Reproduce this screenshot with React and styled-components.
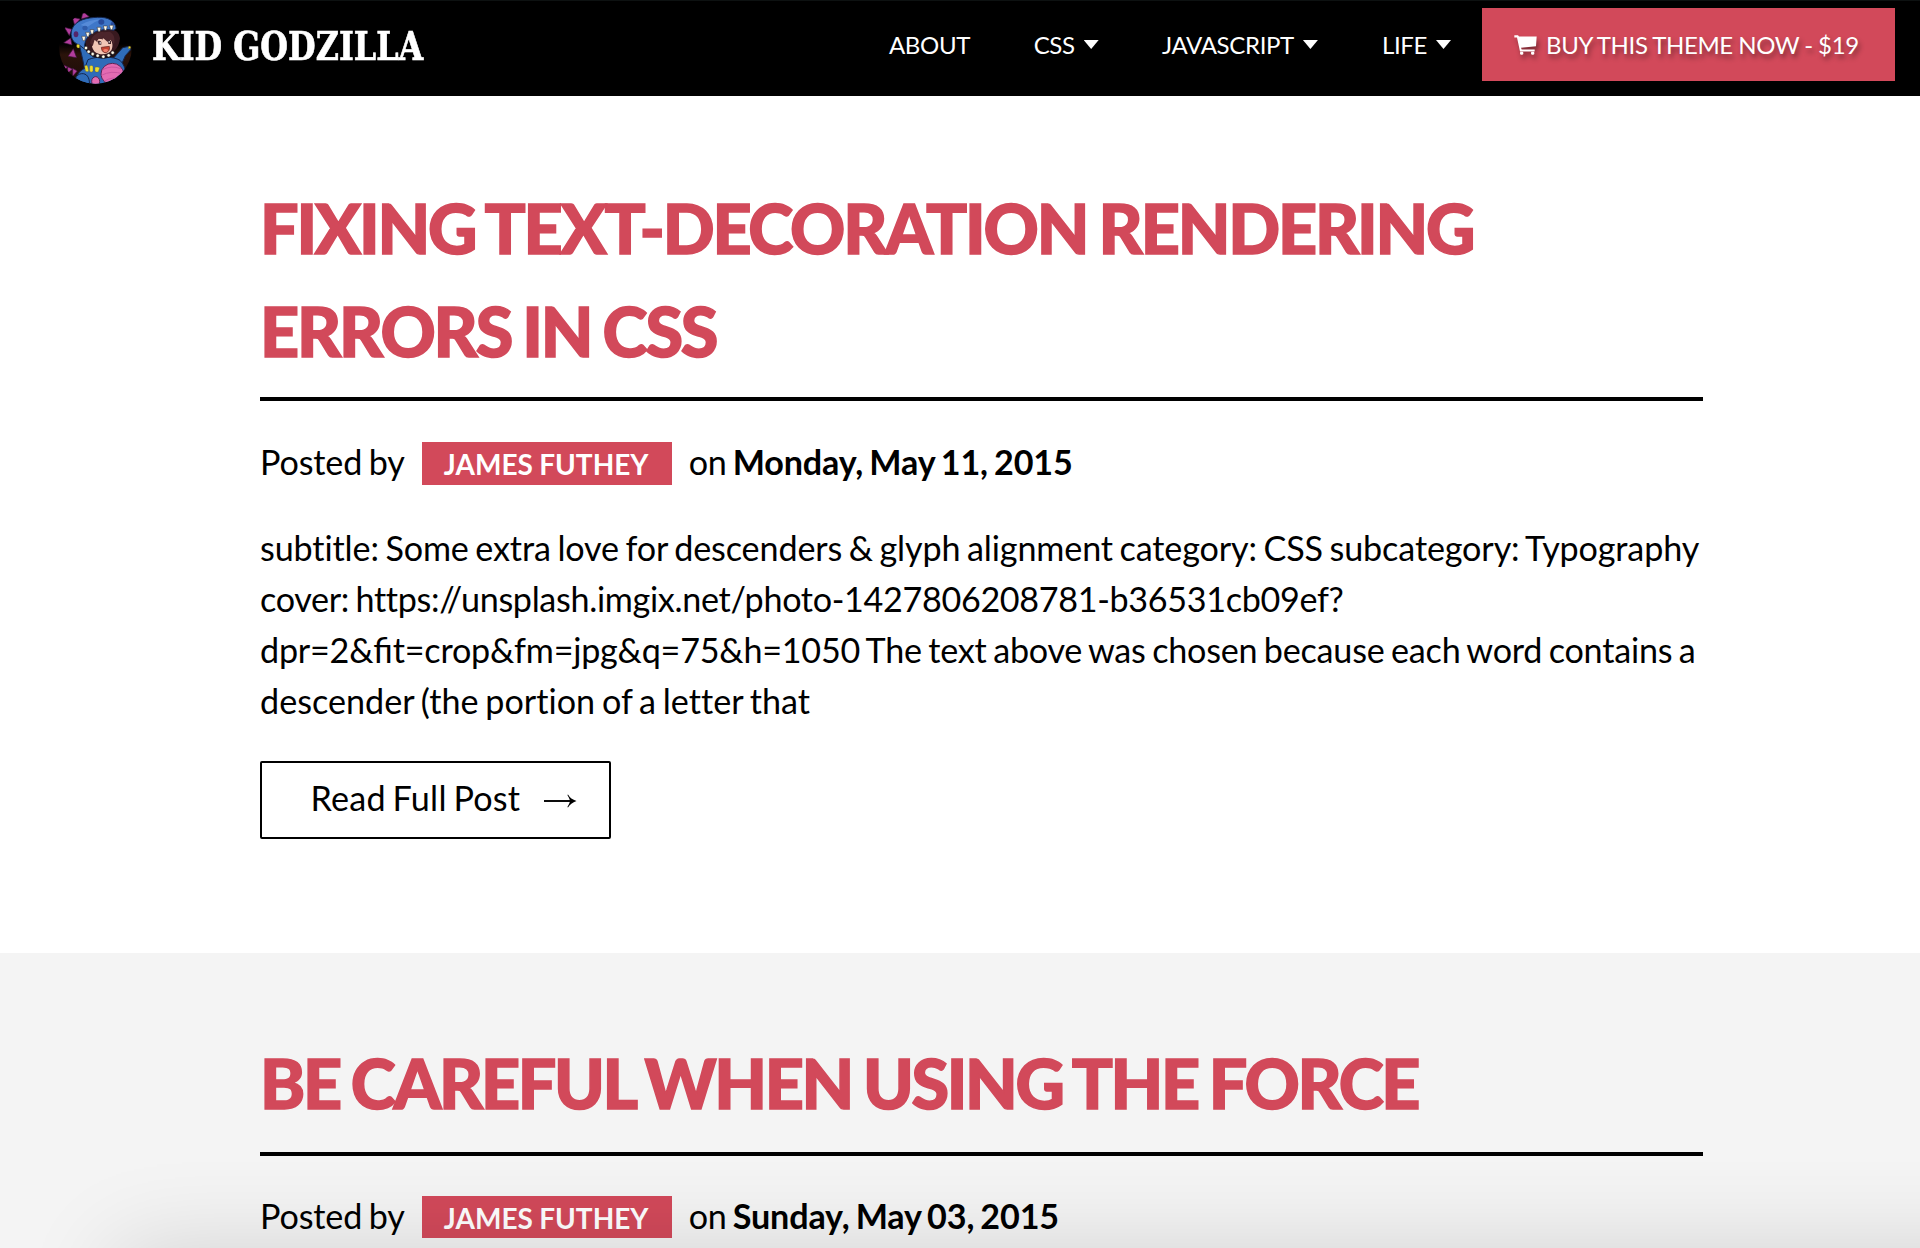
import React from "react";
import styled, { createGlobalStyle, css } from "styled-components";

const accent = "#d2495a";

const GlobalStyle = createGlobalStyle`
  *, *::before, *::after { box-sizing: border-box; }
  html, body { margin: 0; padding: 0; }
  body {
    background: #fff;
    color: #000;
    font-family: Lato, "Open Sans", sans-serif;
    font-size: 34.13px;
    line-height: 51.2px;
  }
`;

const Page = styled.div`
  height: 1248px;
  overflow: hidden;
`;

const Header = styled.header`
  height: 96px;
  padding: 0 25px 0 59px;
  display: flex;
  justify-content: space-between;
  align-items: flex-start;
  background: #000;
  border-top: 1px solid #0d1111;
`;

const Brand = styled.a`
  display: flex;
  align-items: center;
  gap: 20px;
  height: 92px;
  color: #fff;
  text-decoration: none;
`;

const Avatar = styled.svg`
  display: block;
  width: 73px;
  height: 73px;
`;

const BrandName = styled.span`
  font: 700 38.4px/48px "Roboto Slab", "DejaVu Serif", serif;
  font-stretch: condensed;
  white-space: nowrap;
  transform: scaleX(0.921);
  transform-origin: left center;
  -webkit-text-stroke: 0.6px #fff;
`;

const Nav = styled.nav`
  display: flex;
  align-items: flex-start;
  padding-top: 7px;
  font-size: 24px;
  line-height: 73px;
  letter-spacing: -0.35px;
  word-spacing: -0.5px;
  text-transform: uppercase;
  white-space: nowrap;
`;

const NavLink = styled.a`
  display: flex;
  align-items: center;
  gap: 9px;
  margin-right: ${(p) => p.$gap}px;
  color: #fff;
  text-decoration: none;
`;

const Caret = styled.span`
  width: 15px;
  height: 9px;
  background: #fff;
  clip-path: polygon(0 0, 100% 0, 50% 100%);
`;

const BuyLink = styled.a`
  display: flex;
  align-items: center;
  gap: 9px;
  width: 413px;
  padding-left: 32px;
  background: ${accent};
  color: #fff;
  text-decoration: none;
  text-shadow: 2px 4px 5px rgba(0, 0, 0, 0.4);
`;

const CartIcon = styled.svg`
  width: 23px;
  height: 20px;
  filter: drop-shadow(2px 4px 2.5px rgba(0, 0, 0, 0.4));
`;

const Post = styled.article`
  padding: 81.4px 217.5px 113.6px 260px;
  background: #fff;
  ${(p) =>
    p.$shaded &&
    css`
      padding-top: 79.4px;
      background: #f4f4f4;
    `}
`;

const Title = styled.h1`
  margin: 0 0 35px;
  padding-bottom: 15px;
  border-bottom: 4px solid #000;
  color: ${accent};
  font-size: 68.27px;
  font-weight: 900;
  line-height: 102.4px;
  letter-spacing: -2.22px;
  word-spacing: -2.7px;
  text-transform: uppercase;
  -webkit-text-stroke: 1.5px ${accent};
  ${(p) =>
    p.$loose &&
    css`
      margin-bottom: 34px;
      padding-bottom: 17px;
      letter-spacing: -2.38px;
    `}
`;

const Meta = styled.p`
  display: flex;
  align-items: baseline;
  margin: 0 0 34.4px;
  white-space: nowrap;
  letter-spacing: -0.15px;
  word-spacing: -2px;
`;

const Author = styled.a`
  width: 250px;
  height: 42.5px;
  margin: 0 16.5px 0 17.5px;
  padding-right: 2px;
  background: ${accent};
  color: #fff;
  font-size: 28px;
  font-weight: 700;
  line-height: 45px;
  letter-spacing: 0;
  word-spacing: -0.5px;
  text-align: center;
  text-decoration: none;
  text-transform: uppercase;
`;

const PostDate = styled.strong`
  margin-left: 6px;
  font-weight: 700;
`;

const Excerpt = styled.p`
  margin: 0 0 34px;
  font-variant-ligatures: no-common-ligatures;
  word-spacing: -2px;
`;

const Ligated = styled.span`
  font-variant-ligatures: common-ligatures;
  letter-spacing: 0;
`;

const Line = styled.span`
  display: block;
  white-space: nowrap;
  letter-spacing: ${(p) => p.$tracking}px;
`;

const ReadMore = styled.a`
  display: flex;
  align-items: center;
  gap: 23.5px;
  width: 351px;
  height: 78.6px;
  padding: 0 0 5px 48.5px;
  border: 2px solid #000;
  border-radius: 2px;
  color: #000;
  text-decoration: none;
  letter-spacing: 0.25px;
  word-spacing: -2.3px;
  white-space: nowrap;
`;

const Arrow = styled.svg`
  width: 33px;
  height: 14px;
  margin-top: 7px;
`;

const BottomShade = styled.div`
  position: fixed;
  top: 1250px;
  left: 116px;
  right: -200px;
  height: 400px;
  box-shadow: 0 0 90px rgba(0, 0, 0, 0.14);
  pointer-events: none;
`;

const upperTeeth = [[101, 100], [113, 88], [126, 80], [147, 73], [166, 69], [184, 67]];
const lowerTeeth = [[108, 129], [116, 140], [128, 147], [143, 152], [160, 155], [176, 151], [188, 143]];

function KidAvatar() {
  return (
    <Avatar viewBox="27 18 219 219" aria-label="Kid Godzilla">
      <defs>
        <clipPath id="disc"><circle cx="136.5" cy="127.5" r="109" /></clipPath>
        <linearGradient id="night" x1="0" y1="0" x2="0" y2="1">
          <stop offset="0.45" stopColor="#000" />
          <stop offset="0.6" stopColor="#2b130a" />
          <stop offset="1" stopColor="#1b0b08" />
        </linearGradient>
      </defs>
      <g clipPath="url(#disc)">
        <rect x="27" y="18" width="219" height="219" fill="url(#night)" />
        <g fill="#b23d9c" stroke="#3a1438" strokeWidth="2">
          <path d="M67 37L91 42L74 61Z" />
          <path d="M99 20L118 35L94 42Z" />
          <path d="M43 67L66 73L58 92Z" />
          <path d="M41 113L62 99L66 120Z" />
          <path d="M54 154L70 131L80 158Z" />
          <path d="M36 178L54 186L42 194ZM52 185L68 192L54 204ZM68 190L82 198L68 214Z" />
        </g>
        <g fill="#2f6cb9" stroke="#14264f" strokeWidth="3">
          <path d="M88 118C94 150 102 172 104 202L140 200L150 165C126 156 112 144 104 124Z" />
          <path d="M190 160L218 128L238 124L242 134L226 152L212 184Z" />
          <path d="M114 164C142 152 190 154 210 166C232 188 230 216 210 240H84C74 216 84 200 104 190Z" />
          <path d="M78 240C70 218 84 204 100 206C114 208 120 224 118 240Z" />
        </g>
        <path d="M106 100C104 134 122 150 154 154C186 152 208 130 210 100C208 82 196 70 166 72C130 72 112 84 106 100Z" fill="#38191f" />
        <path d="M126 118C126 106 138 100 150 102L166 98L180 102C188 110 190 124 184 136C174 150 150 152 134 140C128 132 125 126 126 118Z" fill="#f1c6b5" />
        <path d="M120 114C124 92 142 80 160 80L158 104L148 98L140 110L134 104L128 124ZM158 82L178 80C192 86 196 100 192 118L182 104L172 110L160 100Z" fill="#4c252b" />
        <path d="M142 108Q150 105 154 111V119H146ZM172 105Q180 103 183 109V117H175Z" fill="#40242b" />
        <path d="M149 111h3v5h-3ZM176 108h3v5h-3Z" fill="#fff" />
        <path d="M154 127L178 124C181 135 174 143 165 143C158 142 154 135 154 127Z" fill="#c4432f" stroke="#5e201e" strokeWidth="2" />
        <path d="M159 135Q167 129 175 135L170 141H163Z" fill="#ef806d" />
        <path d="M88 120C68 114 58 94 66 72C78 44 112 38 142 37C174 35 196 48 198 70L192 76C164 70 134 76 116 94C104 106 102 124 106 134Z" fill="#3f77c8" stroke="#14264f" strokeWidth="3" />
        <path d="M92 60Q120 44 154 43Q132 50 112 66Z" fill="#568bd8" />
        <ellipse cx="154" cy="51" rx="9" ry="8" fill="#274b9c" />
        <ellipse cx="105" cy="69" rx="8" ry="7" fill="#2f5cab" />
        <ellipse cx="78" cy="88" rx="7" ry="9" fill="#54256b" />
        <ellipse cx="187" cy="56" rx="5" ry="5" fill="#274b9c" />
        <path d="M106 128C114 144 134 156 160 158C178 157 192 148 196 140" fill="none" stroke="#171019" strokeWidth="7" />
        <g fill="#fffbe9" stroke="#2b2529" strokeWidth="1.5">
          {upperTeeth.map(([x, y]) => (
            <path key={x} d={`M${x - 6} ${y - 6}h12l-3 13h-5Z`} />
          ))}
          {lowerTeeth.map(([x, y]) => (
            <circle key={x} cx={x} cy={y} r="5" />
          ))}
        </g>
        <ellipse cx="187" cy="207" rx="34" ry="32" fill="#e36bb2" stroke="#5c2556" strokeWidth="3" />
        <path d="M158 194Q184 180 212 191M154 211Q184 195 220 207M164 228Q186 214 214 222" fill="none" stroke="#c955a0" strokeWidth="3" />
        <ellipse cx="137" cy="229" rx="12" ry="14" fill="#e36bb2" stroke="#5c2556" strokeWidth="3" />
        <path d="M104 183q5-5 9 1l3 14q-5 5-10-1ZM119 183q6-4 10 1v15q-6 5-10 0ZM135 187q7-3 14 1l-4 12q-6 3-10-1ZM80 119q5-4 9 2l-1 8q-6 1-8-3ZM236 124q8-2 6 6l-7 1Z" fill="#ecdc32" stroke="#695b18" strokeWidth="1" />
      </g>
    </Avatar>
  );
}

function Cart() {
  return (
    <CartIcon viewBox="45 33 69 57" preserveAspectRatio="none" fill="#fff">
      <path d="M46 34H57L60 37H113L111 65L66 69L68 74H107V80H63L54 40H46Z" />
      <rect x="63" y="81" width="10" height="8" rx="3" />
      <rect x="96" y="81" width="10" height="8" rx="3" />
    </CartIcon>
  );
}

function PostMeta({ date }) {
  return (
    <Meta>
      <span>Posted by</span>
      <Author href="#">James Futhey</Author>
      <span>on</span>
      <PostDate>{date}</PostDate>
    </Meta>
  );
}

export default function App() {
  return (
    <Page>
      <GlobalStyle />
      <Header>
        <Brand href="#">
          <KidAvatar />
          <BrandName>KID GODZILLA</BrandName>
        </Brand>
        <Nav>
          <NavLink href="#" $gap={63.6}>About</NavLink>
          <NavLink href="#" $gap={63.3}>CSS<Caret /></NavLink>
          <NavLink href="#" $gap={64}>JavaScript<Caret /></NavLink>
          <NavLink href="#" $gap={31}>Life<Caret /></NavLink>
          <BuyLink href="#"><Cart />Buy this theme now - $19</BuyLink>
        </Nav>
      </Header>
      <main>
        <Post>
          <Title>Fixing text-decoration rendering errors in CSS</Title>
          <PostMeta date="Monday, May 11, 2015" />
          <Excerpt>
            <Line $tracking={-0.13}>subtitle: Some extra love for descenders &amp; glyph alignment category: CSS subcategory: Typography</Line>
            <Line $tracking={-0.32}>cover: https://unsplash.imgix.net/photo-1427806208781-b36531cb09ef?</Line>
            <Line $tracking={-0.22}>dpr=2&amp;<Ligated>fi</Ligated>t=crop&amp;fm=jpg&amp;q=75&amp;h=1050 The text above was chosen because each word contains a</Line>
            <Line $tracking={0.02}>descender (the portion of a letter that</Line>
          </Excerpt>
          <ReadMore href="#">
            Read Full Post
            <Arrow viewBox="0 0 33 14">
              <path d="M0 7H29" stroke="#000" strokeWidth="1.9" />
              <path d="M24 0.5Q26.5 5 32.5 7Q26.5 9 24 13.5L23.4 13Q25.5 9.5 26.2 7Q25.5 4.5 23.4 1Z" />
            </Arrow>
          </ReadMore>
        </Post>
        <Post $shaded>
          <Title $loose>Be careful when using the Force</Title>
          <PostMeta date="Sunday, May 03, 2015" />
        </Post>
      </main>
      <BottomShade />
    </Page>
  );
}
